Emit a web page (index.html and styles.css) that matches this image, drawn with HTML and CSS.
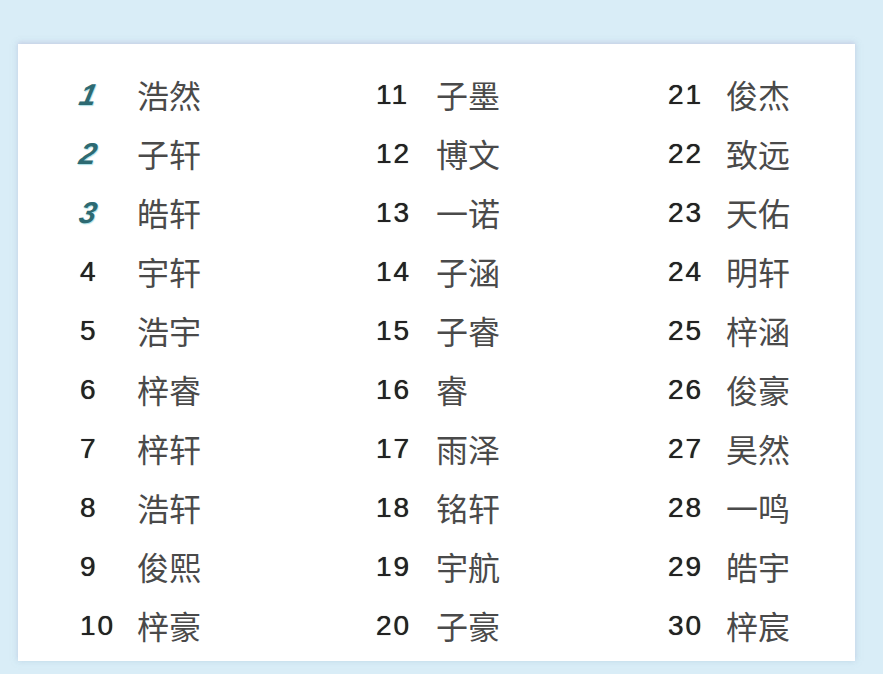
FILE: index.html
```html
<!DOCTYPE html>
<html lang="zh-CN">
<head>
<meta charset="utf-8">
<title>名字列表</title>
<link rel="stylesheet" href="styles.css">
</head>
<body>
<div class="card">
  <div class="col col-1">
    <div class="row"><span class="num top">1</span><span class="name">浩然</span></div>
    <div class="row"><span class="num top">2</span><span class="name">子轩</span></div>
    <div class="row"><span class="num top">3</span><span class="name">皓轩</span></div>
    <div class="row"><span class="num">4</span><span class="name">宇轩</span></div>
    <div class="row"><span class="num">5</span><span class="name">浩宇</span></div>
    <div class="row"><span class="num">6</span><span class="name">梓睿</span></div>
    <div class="row"><span class="num">7</span><span class="name">梓轩</span></div>
    <div class="row"><span class="num">8</span><span class="name">浩轩</span></div>
    <div class="row"><span class="num">9</span><span class="name">俊熙</span></div>
    <div class="row"><span class="num">10</span><span class="name">梓豪</span></div>
  </div>
  <div class="col col-2">
    <div class="row"><span class="num">11</span><span class="name">子墨</span></div>
    <div class="row"><span class="num">12</span><span class="name">博文</span></div>
    <div class="row"><span class="num">13</span><span class="name">一诺</span></div>
    <div class="row"><span class="num">14</span><span class="name">子涵</span></div>
    <div class="row"><span class="num">15</span><span class="name">子睿</span></div>
    <div class="row"><span class="num">16</span><span class="name">睿</span></div>
    <div class="row"><span class="num">17</span><span class="name">雨泽</span></div>
    <div class="row"><span class="num">18</span><span class="name">铭轩</span></div>
    <div class="row"><span class="num">19</span><span class="name">宇航</span></div>
    <div class="row"><span class="num">20</span><span class="name">子豪</span></div>
  </div>
  <div class="col col-3">
    <div class="row"><span class="num">21</span><span class="name">俊杰</span></div>
    <div class="row"><span class="num">22</span><span class="name">致远</span></div>
    <div class="row"><span class="num">23</span><span class="name">天佑</span></div>
    <div class="row"><span class="num">24</span><span class="name">明轩</span></div>
    <div class="row"><span class="num">25</span><span class="name">梓涵</span></div>
    <div class="row"><span class="num">26</span><span class="name">俊豪</span></div>
    <div class="row"><span class="num">27</span><span class="name">昊然</span></div>
    <div class="row"><span class="num">28</span><span class="name">一鸣</span></div>
    <div class="row"><span class="num">29</span><span class="name">皓宇</span></div>
    <div class="row"><span class="num">30</span><span class="name">梓宸</span></div>
  </div>
</div>
</body>
</html>
```

FILE: styles.css
```css
html, body {
  margin: 0;
  padding: 0;
}
body {
  background: #d9edf7;
  width: 883px;
  height: 674px;
  overflow: hidden;
  padding-top: 44px;
  box-sizing: border-box;
}
.card {
  margin-left: 18px;
  width: 837px;
  height: 617px;
  background: #ffffff;
  box-shadow: 0 -2px 4px rgba(200, 195, 225, 0.5), 0 0 6px rgba(170, 205, 225, 0.5);
  box-sizing: border-box;
  padding: 20px 0 0 62px;
  display: grid;
  grid-template-columns: 296px 292px auto;
}
.col {
  display: flex;
  flex-direction: column;
}
.row {
  height: 59px;
  display: flex;
  align-items: center;
}
.num {
  width: 57px;
  padding-top: 2px;
  font-family: "Liberation Sans", Arial, sans-serif;
  font-size: 28px;
  color: #222222;
  letter-spacing: 2px;
  text-shadow: 0 0 0.7px #222222;
}
.col-2 .num { width: 60px; }
.col-3 .num { width: 58px; }
.num.top {
  font-family: "Liberation Sans", Arial, sans-serif;
  font-weight: bold;
  font-style: italic;
  font-size: 30px;
  color: #2d6a72;
  text-shadow: 1px 1px 1px rgba(110, 200, 210, 0.6);
  transform: skewX(-12deg);
  transform-origin: left center;
}
.name {
  font-family: "Noto Sans CJK SC", "Noto Sans", sans-serif;
  font-size: 32px;
  color: #4a4a4a;
  line-height: 1;
}
```
